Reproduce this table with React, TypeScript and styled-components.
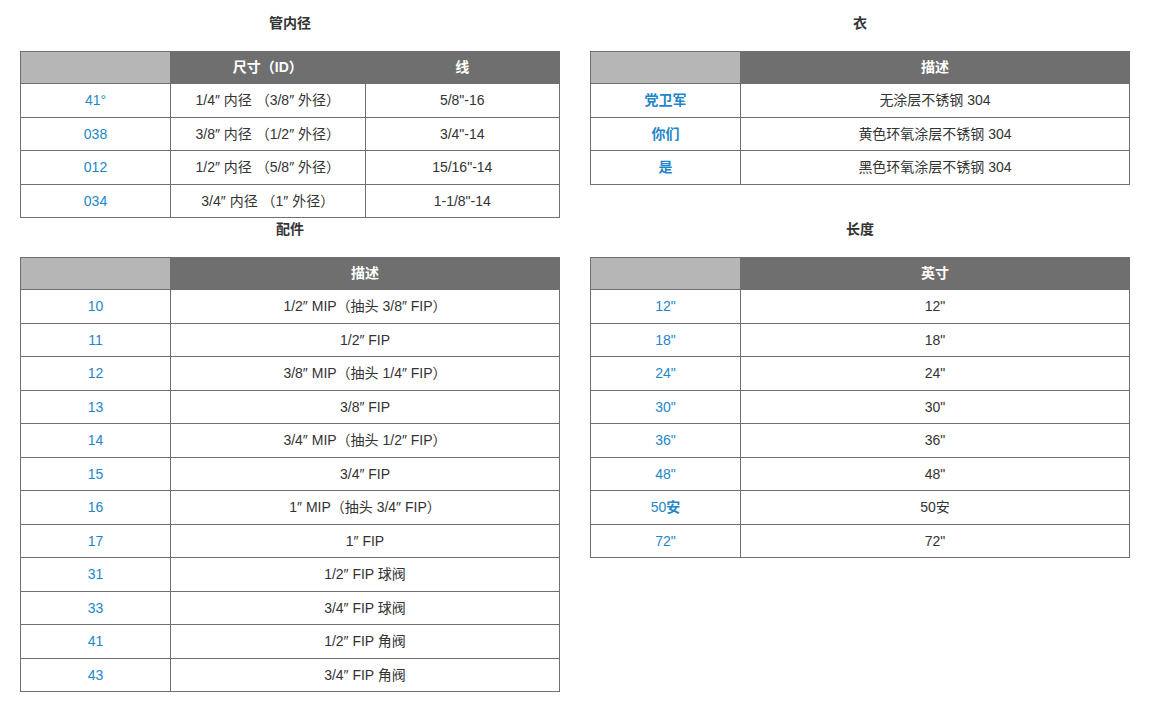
import React from "react";
import styled, { createGlobalStyle } from "styled-components";

const Global = createGlobalStyle`
  html, body { margin: 0; padding: 0; background: #fff; }
  body { font-family: "Liberation Sans", "Noto Sans CJK SC", Arial, sans-serif; color: #333; }
`;

const Page = styled.div`
  display: grid;
  grid-template-columns: 540px 540px;
  column-gap: 30px;
  align-items: start;
  padding: 12px 20px 0 20px;
`;

const Section = styled.section`
  display: flex;
  flex-direction: column;
`;

const Title = styled.h3`
  margin: 0 0 17px 0;
  font-size: 14px;
  line-height: 22px;
  font-weight: 700;
  text-align: center;
  color: #333;
  font-family: "Liberation Sans", "Noto Sans CJK SC", sans-serif;
`;

const Table = styled.table`
  width: 540px;
  border-collapse: collapse;
  table-layout: fixed;
  font-size: 14px;
`;

const Th = styled.th<{ $blank?: boolean }>`
  height: 32px;
  padding: 0 0 3px 0;
  box-sizing: border-box;
  background: ${(p) => (p.$blank ? "#b6b6b6" : "#6f6f6f")};
  color: #fff;
  font-weight: 700;
  text-align: center;
  border: 1px solid #6f6f6f;
`;

const Td = styled.td<{ $link?: boolean }>`
  height: 32.5px;
  padding: 0;
  text-align: center;
  border: 1px solid #6f6f6f;
  color: ${(p) => (p.$link ? "#1f86c9" : "#333")};
  line-height: 16px;
`;

const Strong = styled.span`
  font-weight: 700;
`;

type Row = [React.ReactNode, ...string[]];

function DataTable({ headers, rows, firstWidth = 150 }: { headers: string[]; rows: Row[]; firstWidth?: number }) {
  return (
    <Table>
      <colgroup>
        <col style={{ width: firstWidth }} />
        {headers.map((_, i) => (
          <col key={i} />
        ))}
      </colgroup>
      <thead>
        <tr>
          <Th $blank />
          {headers.map((h) => (
            <Th key={h}>{h}</Th>
          ))}
        </tr>
      </thead>
      <tbody>
        {rows.map((r, i) => (
          <tr key={i}>
            <Td $link>{r[0]}</Td>
            {r.slice(1).map((c, j) => (
              <Td key={j}>{c as string}</Td>
            ))}
          </tr>
        ))}
      </tbody>
    </Table>
  );
}

const pipeRows: Row[] = [
  ["41°", "1/4″ 内径 （3/8″ 外径）", "5/8\"-16"],
  ["038", "3/8″ 内径 （1/2″ 外径）", "3/4\"-14"],
  ["012", "1/2″ 内径 （5/8″ 外径）", "15/16\"-14"],
  ["034", "3/4″ 内径 （1″ 外径）", "1-1/8\"-14"],
];

const coatRows: Row[] = [
  [<Strong>党卫军</Strong>, "无涂层不锈钢 304"],
  [<Strong>你们</Strong>, "黄色环氧涂层不锈钢 304"],
  [<Strong>是</Strong>, "黑色环氧涂层不锈钢 304"],
];

const fittingRows: Row[] = [
  ["10", "1/2″ MIP（抽头 3/8″ FIP）"],
  ["11", "1/2″ FIP"],
  ["12", "3/8″ MIP（抽头 1/4″ FIP）"],
  ["13", "3/8″ FIP"],
  ["14", "3/4″ MIP（抽头 1/2″ FIP）"],
  ["15", "3/4″ FIP"],
  ["16", "1″ MIP（抽头 3/4″ FIP）"],
  ["17", "1″ FIP"],
  ["31", "1/2″ FIP 球阀"],
  ["33", "3/4″ FIP 球阀"],
  ["41", "1/2″ FIP 角阀"],
  ["43", "3/4″ FIP 角阀"],
];

const lengthRows: Row[] = [
  ["12\"", "12\""],
  ["18\"", "18\""],
  ["24\"", "24\""],
  ["30\"", "30\""],
  ["36\"", "36\""],
  ["48\"", "48\""],
  [<>50<Strong>安</Strong></>, "50安"],
  ["72\"", "72\""],
];

export default function App() {
  return (
    <>
      <Global />
      <Page>
        <Section>
          <Title>管内径</Title>
          <DataTable headers={["尺寸（ID）", "线"]} rows={pipeRows} />
        </Section>
        <Section>
          <Title>衣</Title>
          <DataTable headers={["描述"]} rows={coatRows} />
        </Section>
        <Section>
          <Title>配件</Title>
          <DataTable headers={["描述"]} rows={fittingRows} />
        </Section>
        <Section>
          <Title>长度</Title>
          <DataTable headers={["英寸"]} rows={lengthRows} />
        </Section>
      </Page>
    </>
  );
}
